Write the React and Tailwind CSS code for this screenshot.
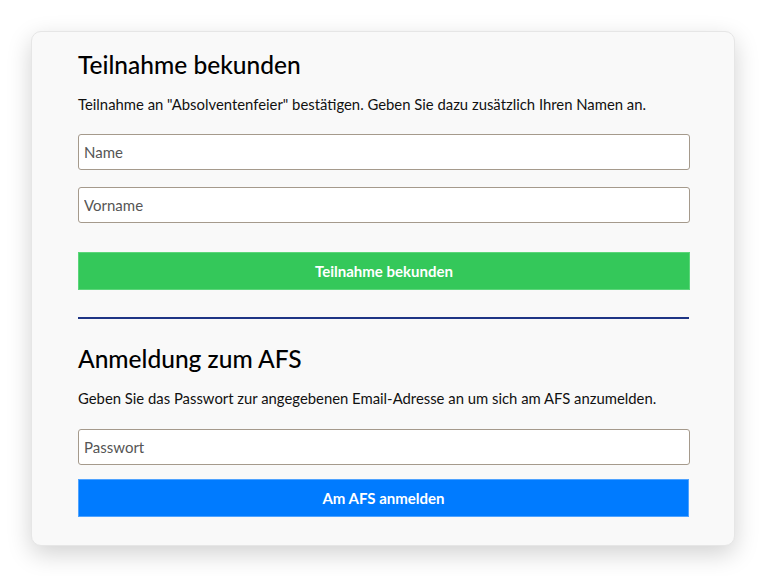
export default function App() {
  return (
    <div className="min-h-[576px] bg-white pt-[31px] pl-[31px]" style={{ fontFamily: 'Lato, "Noto Sans", sans-serif' }}>
      <div className="w-[704px] rounded-[10px] border border-[#e6e6e6] bg-[#f9f9f9] pl-[46px] pr-[44px] pt-[18px] pb-[28px] shadow-[0_8px_24px_rgba(0,0,0,0.18)]">
        <h1 className="text-[24.5px] font-medium leading-[30px] text-black">Teilnahme bekunden</h1>
        <p className="mt-[13px] text-[14.85px] leading-[22px] text-[#111]">
          Teilnahme an "Absolventenfeier" bestätigen. Geben Sie dazu zusätzlich Ihren Namen an.
        </p>
        <input
          placeholder="Name"
          className="mt-[19px] block h-[36px] w-full rounded-[3px] border border-[#a59a8c] bg-white px-[5px] text-[15px] text-[#444] placeholder-[#555] outline-none"
        />
        <input
          placeholder="Vorname"
          className="mt-[17px] block h-[36px] w-full rounded-[3px] border border-[#a59a8c] bg-white px-[5px] text-[15px] text-[#444] placeholder-[#555] outline-none"
        />
        <button className="mt-[29px] block h-[38px] w-full border border-[#5cd67a] bg-[#34c85a] text-[15px] font-bold text-white">
          Teilnahme bekunden
        </button>
        <div className="mt-[27px] h-[2px] w-[611px] bg-[#1e3585]" />
        <h2 className="mt-[25px] text-[24.5px] font-medium leading-[30px] text-black">Anmeldung zum AFS</h2>
        <p className="mt-[13px] text-[14.85px] leading-[22px] text-[#111]">
          Geben Sie das Passwort zur angegebenen Email-Adresse an um sich am AFS anzumelden.
        </p>
        <input
          type="password"
          placeholder="Passwort"
          className="mt-[20px] block h-[36px] w-full rounded-[3px] border border-[#a59a8c] bg-white px-[5px] text-[15px] text-[#444] placeholder-[#555] outline-none"
        />
        <button className="mt-[14px] block h-[38px] w-[611px] border border-[#4fa3ff] bg-[#007bff] text-[15px] font-bold text-white">
          Am AFS anmelden
        </button>
      </div>
    </div>
  );
}
